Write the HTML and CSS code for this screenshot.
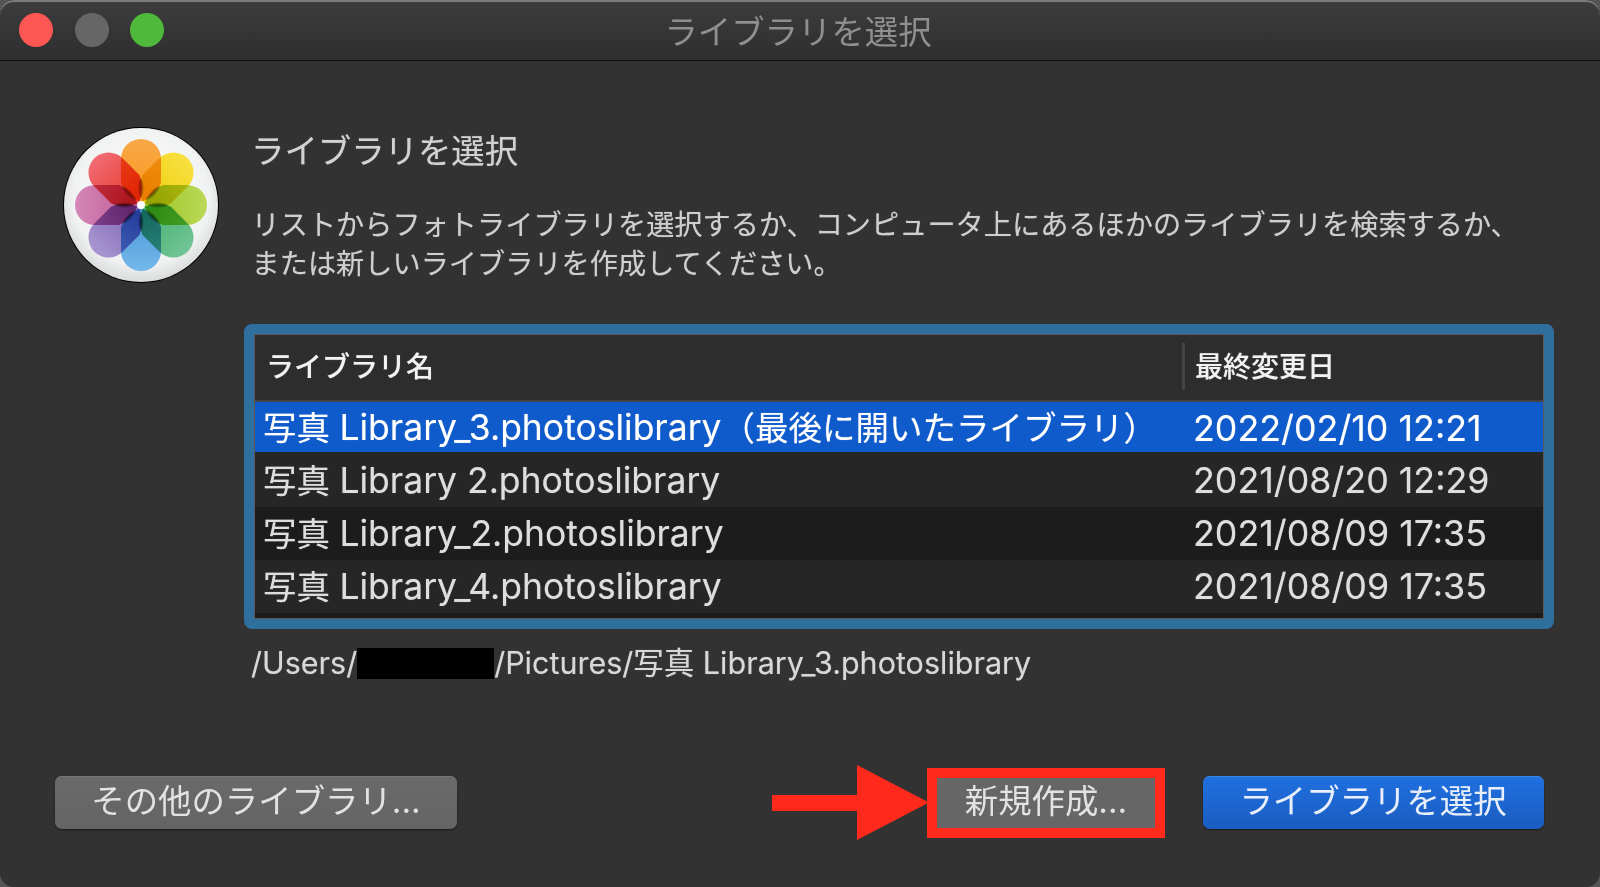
FILE: index.html
```html
<!DOCTYPE html>
<html lang="ja">
<head>
<meta charset="utf-8">
<title>ライブラリを選択</title>
<link rel="stylesheet" href="styles.css">
</head>
<body>
<div class="window">
  <header class="titlebar">
    <div class="lights">
      <span class="light light-close"></span>
      <span class="light light-min"></span>
      <span class="light light-max"></span>
    </div>
    <div class="title">ライブラリを選択</div>
  </header>
  <main class="content">
    <div class="app-icon">
      <svg viewBox="0 0 156 156" width="156" height="156" aria-hidden="true">
        <defs>
          <radialGradient id="disc" cx="50%" cy="45%" r="55%">
            <stop offset="0" stop-color="#ffffff"/>
            <stop offset="0.8" stop-color="#f1f2f2"/>
            <stop offset="1" stop-color="#d9dadb"/>
          </radialGradient>
          <linearGradient id="p0" gradientUnits="userSpaceOnUse" x1="0" y1="-66" x2="0" y2="-10"><stop offset="0" stop-color="#f8a848"/><stop offset="1" stop-color="#f89a20"/></linearGradient>
          <linearGradient id="p1" gradientUnits="userSpaceOnUse" x1="0" y1="-66" x2="0" y2="-10"><stop offset="0" stop-color="#f8e040"/><stop offset="1" stop-color="#f0d010"/></linearGradient>
          <linearGradient id="p2" gradientUnits="userSpaceOnUse" x1="0" y1="-66" x2="0" y2="-10"><stop offset="0" stop-color="#bcd858"/><stop offset="1" stop-color="#9cc828"/></linearGradient>
          <linearGradient id="p3" gradientUnits="userSpaceOnUse" x1="0" y1="-66" x2="0" y2="-10"><stop offset="0" stop-color="#70c594"/><stop offset="1" stop-color="#48b070"/></linearGradient>
          <linearGradient id="p4" gradientUnits="userSpaceOnUse" x1="0" y1="-66" x2="0" y2="-10"><stop offset="0" stop-color="#74b8ea"/><stop offset="1" stop-color="#4c98d8"/></linearGradient>
          <linearGradient id="p5" gradientUnits="userSpaceOnUse" x1="0" y1="-66" x2="0" y2="-10"><stop offset="0" stop-color="#a896d0"/><stop offset="1" stop-color="#8068b8"/></linearGradient>
          <linearGradient id="p6" gradientUnits="userSpaceOnUse" x1="0" y1="-66" x2="0" y2="-10"><stop offset="0" stop-color="#d488b8"/><stop offset="1" stop-color="#c05c98"/></linearGradient>
          <linearGradient id="p7" gradientUnits="userSpaceOnUse" x1="0" y1="-66" x2="0" y2="-10"><stop offset="0" stop-color="#f06c74"/><stop offset="1" stop-color="#e83c30"/></linearGradient>
        </defs>
        <circle cx="78" cy="78" r="78" fill="#000"/>
        <circle cx="78" cy="78" r="77" fill="url(#disc)"/>
        <g transform="translate(78 78)" class="petals">
          <path class="petal" fill="url(#p0)" d="M0 -3 Q-14 -9 -20 -22 L-20 -46 A20 20 0 0 1 20 -46 L20 -22 Q14 -9 0 -3Z"/>
          <path class="petal" fill="url(#p1)" transform="rotate(45)" d="M0 -3 Q-14 -9 -20 -22 L-20 -46 A20 20 0 0 1 20 -46 L20 -22 Q14 -9 0 -3Z"/>
          <path class="petal" fill="url(#p2)" transform="rotate(90)" d="M0 -3 Q-14 -9 -20 -22 L-20 -46 A20 20 0 0 1 20 -46 L20 -22 Q14 -9 0 -3Z"/>
          <path class="petal" fill="url(#p3)" transform="rotate(135)" d="M0 -3 Q-14 -9 -20 -22 L-20 -46 A20 20 0 0 1 20 -46 L20 -22 Q14 -9 0 -3Z"/>
          <path class="petal" fill="url(#p4)" transform="rotate(180)" d="M0 -3 Q-14 -9 -20 -22 L-20 -46 A20 20 0 0 1 20 -46 L20 -22 Q14 -9 0 -3Z"/>
          <path class="petal" fill="url(#p5)" transform="rotate(225)" d="M0 -3 Q-14 -9 -20 -22 L-20 -46 A20 20 0 0 1 20 -46 L20 -22 Q14 -9 0 -3Z"/>
          <path class="petal" fill="url(#p6)" transform="rotate(270)" d="M0 -3 Q-14 -9 -20 -22 L-20 -46 A20 20 0 0 1 20 -46 L20 -22 Q14 -9 0 -3Z"/>
          <path class="petal" fill="url(#p7)" transform="rotate(315)" d="M0 -3 Q-14 -9 -20 -22 L-20 -46 A20 20 0 0 1 20 -46 L20 -22 Q14 -9 0 -3Z"/>
          <path class="lens" d="M0 -6 Q-5 -17 0 -28 Q5 -17 0 -6Z"/>
          <path class="lens" transform="rotate(45)" d="M0 -6 Q-5 -17 0 -28 Q5 -17 0 -6Z"/>
          <path class="lens" transform="rotate(90)" d="M0 -6 Q-5 -17 0 -28 Q5 -17 0 -6Z"/>
          <path class="lens" transform="rotate(135)" d="M0 -6 Q-5 -17 0 -28 Q5 -17 0 -6Z"/>
          <path class="lens" transform="rotate(180)" d="M0 -6 Q-5 -17 0 -28 Q5 -17 0 -6Z"/>
          <path class="lens" transform="rotate(225)" d="M0 -6 Q-5 -17 0 -28 Q5 -17 0 -6Z"/>
          <path class="lens" transform="rotate(270)" d="M0 -6 Q-5 -17 0 -28 Q5 -17 0 -6Z"/>
          <path class="lens" transform="rotate(315)" d="M0 -6 Q-5 -17 0 -28 Q5 -17 0 -6Z"/>
          <circle r="4" fill="#fff"/>
        </g>
      </svg>
    </div>
    <div class="main">
      <h1 class="heading">ライブラリを選択</h1>
      <p class="description">リストからフォトライブラリを選択するか、コンピュータ上にあるほかのライブラリを検索するか、<br>または新しいライブラリを作成してください。</p>
      <div class="table-ring">
        <div class="table">
          <div class="table-head">
            <div class="col-name">ライブラリ名</div>
            <div class="col-date">最終変更日</div>
          </div>
          <div class="table-row row-selected">
            <div class="cell-name">写真 <span class="latin">Library_3.photoslibrary</span>（最後に開いたライブラリ）</div>
            <div class="cell-date">2022/02/10 12:21</div>
          </div>
          <div class="table-row row-tall">
            <div class="cell-name">写真 <span class="latin">Library 2.photoslibrary</span></div>
            <div class="cell-date">2021/08/20 12:29</div>
          </div>
          <div class="table-row row-alt">
            <div class="cell-name">写真 <span class="latin">Library_2.photoslibrary</span></div>
            <div class="cell-date">2021/08/09 17:35</div>
          </div>
          <div class="table-row">
            <div class="cell-name">写真 <span class="latin">Library_4.photoslibrary</span></div>
            <div class="cell-date">2021/08/09 17:35</div>
          </div>
          <div class="table-tail"></div>
        </div>
      </div>
      <div class="path">/Users/<span class="redacted"></span>/Pictures/写真 Library_3.photoslibrary</div>
    </div>
  </main>
  <footer class="footer">
    <button class="btn btn-other">その他のライブラリ...</button>
    <div class="spacer"></div>
    <svg class="arrow" viewBox="0 0 157 75" width="157" height="75" aria-hidden="true">
      <path fill="#ff2a1c" d="M0 30H85V0L157 37.5 85 75V46H0Z"/>
    </svg>
    <button class="btn btn-new">新規作成...</button>
    <button class="btn btn-primary">ライブラリを選択</button>
  </footer>
</div>
</body>
</html>
```
FILE: styles.css
```css
* { box-sizing: border-box; }
html, body { margin: 0; padding: 0; height: 100%; background: #555; }
body {
  width: 1600px;
  height: 887px;
  overflow: hidden;
  font-family: "Inter", "Noto Sans CJK JP", sans-serif;
  text-shadow: 0 0 1px rgba(225,225,225,.45);
}
.window {
  width: 1600px;
  height: 887px;
  background: #323232;
  border-radius: 14px;
  overflow: hidden;
  display: flex;
  flex-direction: column;
  color: #dcdcdc;
}
.titlebar {
  height: 61px;
  flex: none;
  display: flex;
  align-items: center;
  position: relative;
  border-radius: 14px 14px 0 0;
  background: linear-gradient(#444 0, #3c3c3c 4px, #2e2e2e 100%);
  border-bottom: 1px solid #0c0c0c;
  box-shadow: inset 0 2px 0 #7c7c7c;
}
.lights {
  display: flex;
  gap: 21.5px;
  padding-left: 19px;
}
.light { width: 34px; height: 34px; border-radius: 50%; }
.light-close { background: #fd5753; }
.light-min { background: #666; }
.light-max { background: #4fb93b; }
.title {
  position: absolute;
  left: 0;
  right: 4px;
  top: 12px;
  text-align: center;
  font-size: 33.4px;
  line-height: 40px;
  color: #8f8f8f;
  text-shadow: none;
}
.content {
  display: flex;
  flex: none;
  padding: 68px 45px 0 63px;
}
.app-icon { width: 156px; height: 156px; flex: none; margin: -2px 34px 0 0; }
.app-icon svg { display: block; }
.petal { mix-blend-mode: multiply; }
.lens { fill: #000; opacity: .25; }
.petals { isolation: isolate; }
.main { flex: 1; min-width: 0; margin-top: -2px; }
.heading {
  margin: 0 0 0 -2px;
  padding-top: 2px;
  font-size: 33.4px;
  font-weight: 400;
  line-height: 44px;
  color: #d2d2d2;
}
.description {
  margin: 33px 0 0 -1.5px;
  font-size: 28.2px;
  line-height: 39px;
  color: #cfcfcf;
  white-space: nowrap;
}
.table-ring {
  margin: 40px 0 0 -9px;
  width: 1310px;
  height: 305px;
  border: 10px solid #2f6f9d;
  border-radius: 8px;
  background: #5a5a5a;
  padding: 1px;
}
.table { height: 100%; display: flex; flex-direction: column; background: #2d2d2d; }
.table-head {
  height: 67px;
  flex: none;
  display: flex;
  align-items: center;
  border-bottom: 2px solid #444;
  font-size: 28px;
  color: #f2f2f2;
  font-weight: 500;
  padding-left: 11px;
}
.col-name { width: 916px; flex: none; margin-bottom: 6px; }
.col-date {
  border-left: 3px solid #444;
  height: 47px;
  display: flex;
  align-items: center;
  padding: 0 0 3px 10px;
  margin-bottom: 3px;
}
.table-row {
  height: 53px;
  flex: none;
  display: flex;
  align-items: center;
  background: #262626;
  font-size: 33.5px;
  color: #dedede;
  white-space: nowrap;
  padding-left: 8px;
}
.row-selected { background: #0f5bcc; color: #fff; height: 50px; padding-top: 2px; }
.row-tall { height: 55px; padding-top: 2px; }
.row-alt { background: #1c1c1c; }
.cell-name { width: 930px; flex: none; margin-bottom: 5px; }
.latin { font-size: 35.5px; }
.cell-date { font-size: 35.8px; margin-bottom: 1px; }
.table-tail { flex: 1; background: #1c1c1c; }
.path {
  margin: 14px 0 0 -2px;
  font-size: 30.5px;
  line-height: 40px;
  color: #d8d8d8;
  white-space: nowrap;
  display: flex;
  align-items: center;
}
.redacted { display: inline-block; width: 137px; height: 31px; background: #000; }
.footer {
  flex: none;
  display: flex;
  align-items: center;
  margin-top: 82px;
  padding: 0 56.5px 0 55px;
}
.btn {
  height: 53px;
  border: 0;
  border-radius: 7px;
  font-family: inherit;
  font-size: 33.4px;
  line-height: 36px;
  color: #e2e2e2;
  background: linear-gradient(#6a6a6a, #646464);
  box-shadow: inset 0 1px 0 #767676, 0 1px 2px rgba(0,0,0,.5);
  padding: 0 0 4px;
}
.btn-other { width: 402px; }
.spacer { flex: 1; }
.arrow { flex: none; margin-right: -2px; position: relative; z-index: 1; }
.btn-new {
  width: 238px;
  height: 70px;
  border: 10px solid #ff2a1c;
  border-radius: 0;
  background: #666;
  box-shadow: none;
  margin-right: 37.5px;
}
.btn-primary {
  width: 341px;
  background: linear-gradient(#2070e0, #1a5cc0);
  box-shadow: inset 0 1px 0 #3d86ea, 0 1px 2px rgba(0,0,0,.5);
  color: #e8effa;
}
```
